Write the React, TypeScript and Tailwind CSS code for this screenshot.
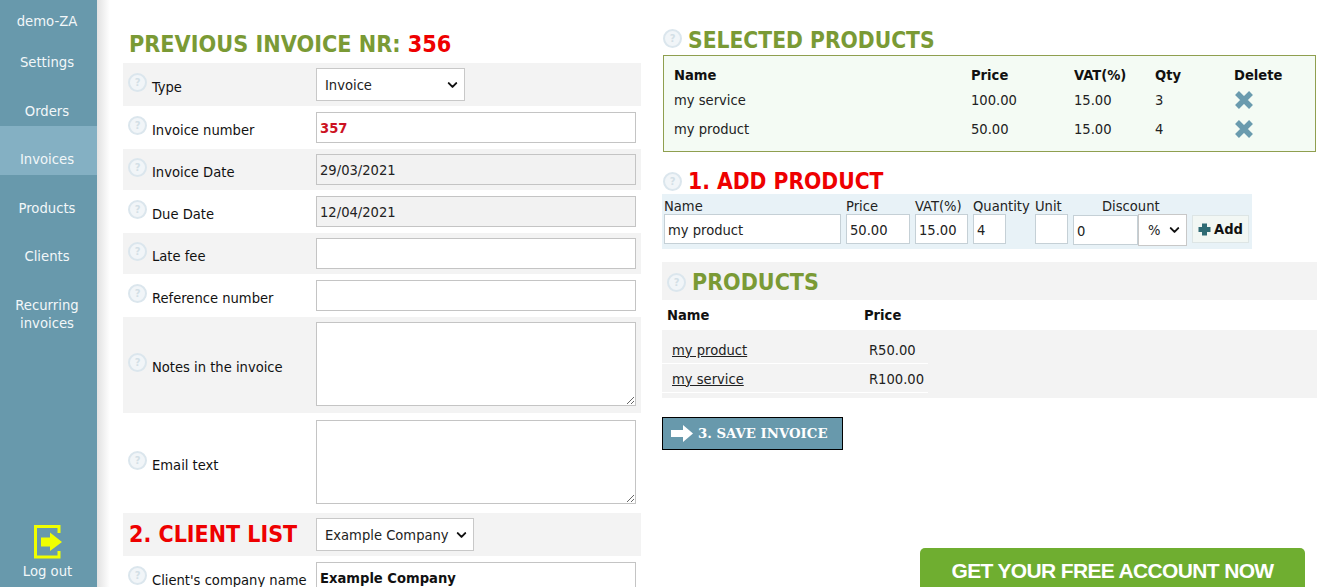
import { ChevronDown } from 'lucide-react'

const font = { fontFamily: '"DejaVu Sans Condensed", Tahoma, "Noto Sans", sans-serif' }

const menu = [
  { label: 'Settings' },
  { label: 'Orders' },
  { label: 'Invoices', active: true },
  { label: 'Products' },
  { label: 'Clients' },
]

function Help({ className = '' }: { className?: string }) {
  return (
    <span className={'inline-flex h-[19px] w-[19px] shrink-0 items-center justify-center rounded-full border-2 border-[#dbe6ed] bg-[#f1f5f8] text-[11px] font-bold leading-none text-[#d3dfe6] ' + className}>
      ?
    </span>
  )
}

function Row({ label, gray, h, children }: { label: string; gray?: boolean; h: string; children: React.ReactNode }) {
  return (
    <div className={'flex items-center ' + h + (gray ? ' bg-[#f3f3f3]' : '')}>
      <div className="flex h-[24px] w-[193px] items-start pl-[5px]">
        <Help />
        <span className="ml-[5px] mt-[4px] text-[14.6px] leading-[20px] text-[#111]">{label}</span>
      </div>
      {children}
    </div>
  )
}

function Select({ value, className, pad = 'pl-[8px]' }: { value: string; className: string; pad?: string }) {
  return (
    <div className={'relative ' + className}>
      <select defaultValue={value} className={'h-full w-full appearance-none border border-[#c8c8c8] bg-white text-[14.6px] text-[#222] ' + pad}>
        <option>{value}</option>
      </select>
      <ChevronDown size={15} strokeWidth={3.2} className="pointer-events-none absolute right-[5px] top-1/2 -translate-y-1/2 text-[#111]" />
    </div>
  )
}

const inputCls = 'h-[31px] w-[320px] border border-[#c4c4c4] px-[3px] text-[14.6px] outline-none'
const addInput = 'h-[30px] border border-[#c5d0d6] bg-white px-[3px] outline-none'

function Cross() {
  return (
    <svg width="20" height="20" viewBox="0 0 20 20" className="-mt-[0px]">
      <path d="M3 3 L17 17 M17 3 L3 17" stroke="#6a9bae" strokeWidth="5.5" />
    </svg>
  )
}

function FieldLabel({ children, className = '' }: { children: React.ReactNode; className?: string }) {
  return <span className={'h-[20px] pt-[2px] leading-[20px] ' + className}>{children}</span>
}

export default function App() {
  return (
    <div className="relative flex h-[587px] w-[1319px] overflow-hidden bg-white" style={font}>
      {/* sidebar */}
      <aside className="flex w-[97px] shrink-0 flex-col bg-[#6899ac] text-center text-[14.7px] text-[#f2f7f9]">
        <div className="h-[29px] pr-[3px] pt-[12px] leading-[18px]">demo-ZA</div>
        <nav className="flex flex-col">
          {menu.map((m) => (
            <a key={m.label} className={'h-[48.5px] pr-[3px] pt-[23px] leading-[20px]' + (m.active ? ' bg-[#84b0c3]' : '')}>
              {m.label}
            </a>
          ))}
          <a className="pr-[3px] pt-[24px] leading-[18px]">
            Recurring
            <br />
            invoices
          </a>
        </nav>
        <div className="mt-auto flex flex-col items-center pb-[7px] pl-[1px] pr-[3px]">
          <svg width="29" height="34" viewBox="0 0 29 34" className="ml-[1px]">
            <path d="M25 8 V1.5 H1.5 V32 H25 V26" fill="none" stroke="#f0ff00" strokeWidth="3" />
            <path d="M7 12.5 H16 V7.5 L28 17 L16 26 V21.5 H7 Z" fill="#f0ff00" />
          </svg>
          <span className="mt-[3px] leading-[18px]">Log out</span>
        </div>
      </aside>
      <div className="w-[26px] shrink-0 bg-gradient-to-r from-[#e2e2e2] to-white to-50%" />

      <main className="flex flex-1 items-start">
        {/* left column */}
        <section className="w-[518px] shrink-0">
          <h1 className="flex h-[63px] items-end pb-[5px] pl-[6px] text-[23.2px] font-bold leading-[28px] text-[#7a9a35]">
            PREVIOUS INVOICE NR:&nbsp;<span className="text-[#ee0000]">356</span>
          </h1>
          <Row label="Type" gray h="h-[43px]">
            <Select value="Invoice" className="h-[33px] w-[149px]" />
          </Row>
          <Row label="Invoice number" h="h-[43px]">
            <input readOnly value="357" className={inputCls + ' bg-white font-bold text-[#cc1122]'} />
          </Row>
          <Row label="Invoice Date" gray h="h-[41px]">
            <input readOnly value="29/03/2021" className={inputCls + ' bg-[#f2f2f2] text-[#222]'} />
          </Row>
          <Row label="Due Date" h="h-[43px]">
            <input readOnly value="12/04/2021" className={inputCls + ' bg-[#f2f2f2] text-[#222]'} />
          </Row>
          <Row label="Late fee" gray h="h-[41px]">
            <input readOnly className={inputCls + ' bg-white'} />
          </Row>
          <Row label="Reference number" h="h-[43px]">
            <input readOnly className={inputCls + ' bg-white'} />
          </Row>
          <Row label="Notes in the invoice" gray h="h-[96px]">
            <textarea readOnly className="-mt-[2px] h-[84px] w-[320px] border border-[#c4c4c4] bg-white" />
          </Row>
          <Row label="Email text" h="h-[100px]">
            <textarea readOnly className="-mt-[3px] h-[84px] w-[320px] border border-[#c4c4c4] bg-white" />
          </Row>
          <div className="flex h-[43px] items-center bg-[#f3f3f3]">
            <h2 className="w-[193px] pl-[6px] text-[23px] font-bold text-[#ee0000]">2. CLIENT LIST</h2>
            <Select value="Example Company" className="h-[33px] w-[158px]" />
          </div>
          <Row label="Client's company name" h="h-[43px]">
            <input readOnly value="Example Company" className={inputCls + ' bg-white font-bold text-[#111]'} />
          </Row>
        </section>

        {/* right column */}
        <section className="ml-[21px] w-[655px] shrink-0">
          <div className="flex h-[55px] items-end pb-[1px] pl-[1px]">
            <Help className="mb-[6px]" />
            <h2 className="ml-[6px] text-[22.6px] font-bold leading-[28px] text-[#7a9a35]">SELECTED PRODUCTS</h2>
          </div>
          <div className="ml-[1px] w-[653px] border border-[#8f9f4f] bg-[#f4fbf4] pb-[8px] pl-[10px] pt-[8px] text-[14.6px] text-[#222]">
            <div className="flex h-[21px] items-center font-bold text-[#111]">
              <span className="w-[297px]">Name</span>
              <span className="w-[103px]">Price</span>
              <span className="w-[81px]">VAT(%)</span>
              <span className="w-[79px]">Qty</span>
              <span>Delete</span>
            </div>
            {[
              ['my service', '100.00', '15.00', '3'],
              ['my product', '50.00', '15.00', '4'],
            ].map((r) => (
              <div key={r[0]} className="flex h-[29px] items-center">
                <span className="w-[297px]">{r[0]}</span>
                <span className="w-[103px]">{r[1]}</span>
                <span className="w-[81px]">{r[2]}</span>
                <span className="w-[79px]">{r[3]}</span>
                <Cross />
              </div>
            ))}
          </div>

          <div className="mt-[14px] flex h-[28px] items-center pl-[1px] pt-[2px]">
            <Help />
            <h2 className="ml-[6px] text-[22.6px] font-bold leading-[28px] text-[#ee0000]">1. ADD PRODUCT</h2>
          </div>
          <div className="flex h-[55px] w-[590px] items-start gap-[5px] bg-[#e8f2f7] pl-[2px] text-[14.6px] text-[#222]">
            <label className="flex w-[177px] flex-col">
              <FieldLabel>Name</FieldLabel>
              <input readOnly value="my product" className={addInput} />
            </label>
            <label className="flex w-[64px] flex-col">
              <FieldLabel>Price</FieldLabel>
              <input readOnly value="50.00" className={addInput} />
            </label>
            <label className="flex w-[53px] flex-col">
              <FieldLabel>VAT(%)</FieldLabel>
              <input readOnly value="15.00" className={addInput} />
            </label>
            <label className="flex w-[57px] flex-col">
              <FieldLabel>Quantity</FieldLabel>
              <input readOnly value="4" className={addInput + ' w-[33px]'} />
            </label>
            <label className="flex w-[33px] flex-col">
              <FieldLabel>Unit</FieldLabel>
              <input readOnly className={addInput} />
            </label>
            <div className="flex flex-col">
              <FieldLabel className="pl-[29px]">Discount</FieldLabel>
              <div className="flex">
                <input readOnly value="0" className={addInput + ' mt-[1px] w-[65px]'} />
                <Select value="%" className="h-[32px] w-[49px]" pad="pl-[9px]" />
              </div>
            </div>
            <button className="mt-[21px] flex h-[28px] w-[57px] items-center justify-center gap-[3px] border border-[#dde5e5] bg-[#f2f7f4] font-bold text-[#111]">
              <svg width="13" height="13" viewBox="0 0 13 13">
                <path d="M6.5 0.5 V12.5 M0.5 6.5 H12.5" stroke="#2f6b74" strokeWidth="5" />
              </svg>
              Add
            </button>
          </div>

          <div className="mt-[13px] flex h-[38px] items-center bg-[#f3f3f3] pl-[5px] pt-[2px]">
            <Help />
            <h2 className="ml-[6px] text-[23px] font-bold text-[#7a9a35]">PRODUCTS</h2>
          </div>
          <div className="flex h-[30px] items-center pl-[5px] text-[14.6px] font-bold text-[#111]">
            <span className="w-[197px]">Name</span>
            <span>Price</span>
          </div>
          <div className="h-[68px] bg-[#f3f3f3] pt-[5px] text-[14.6px] text-[#222]">
            {[
              ['my product', 'R50.00'],
              ['my service', 'R100.00'],
            ].map((r) => (
              <div key={r[0]} className="flex h-[29px] w-[266px] items-center border-b border-white pl-[10px] pt-[1px]">
                <a className="w-[197px] underline">{r[0]}</a>
                <span>{r[1]}</span>
              </div>
            ))}
          </div>

          <button className="mt-[19px] flex h-[33px] w-[181px] items-center border border-black bg-[#6899ac] pl-[8px] text-[13.3px] font-bold text-white" style={{ fontFamily: '"DejaVu Serif", serif' }}>
            <svg width="22" height="17" viewBox="0 0 22 17">
              <path d="M0 5 H12 V0 L22 8.5 L12 17 V12 H0 Z" fill="#fff" />
            </svg>
            <span className="ml-[5px]">3. SAVE INVOICE</span>
          </button>
        </section>
      </main>

      <a className="absolute left-[920px] top-[548px] flex h-[60px] w-[385px] justify-center rounded-t-[5px] bg-[#6fae30] pt-[10px] text-[21px] font-bold leading-[25px] tracking-[-0.65px] text-white" style={{ fontFamily: '"Liberation Sans", sans-serif' }}>
        GET YOUR FREE ACCOUNT NOW
      </a>
    </div>
  )
}
